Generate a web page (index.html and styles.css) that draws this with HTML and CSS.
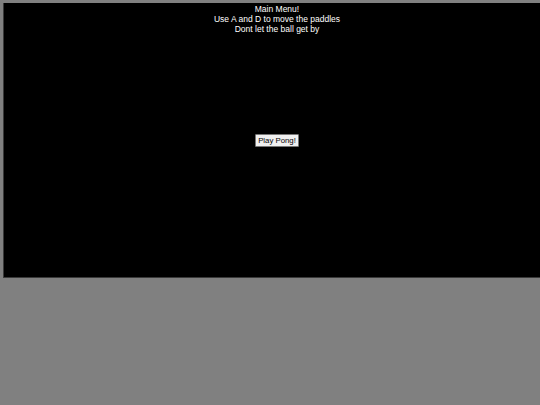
FILE: index.html
```html
<!DOCTYPE html>
<html>
<head>
<meta charset="utf-8">
<link rel="stylesheet" href="styles.css">
</head>
<body>
<div class="game">
  <div class="menu">
    <div>Main Menu!</div>
    <div>Use A and D to move the paddles</div>
    <div>Dont let the ball get by</div>
  </div>
  <button class="play">Play Pong!</button>
</div>
</body>
</html>
```
FILE: styles.css
```css
html, body {
  margin: 0;
  padding: 0;
  background: #808080;
  overflow: hidden;
}
body {
  padding: 3px 0 0 3px;
  width: 540px;
  height: 405px;
  box-sizing: border-box;
}
.game {
  width: 548px;
  height: 275px;
  background: #000;
  box-shadow: inset 1px 0 0 #3a3a3a, inset 0 -1px 0 #3a3a3a;
  display: grid;
  font-family: "Liberation Sans", Arial, sans-serif;
  color: #fff;
}
.menu {
  grid-area: 1 / 1;
  align-self: start;
  text-align: center;
  font-size: 8.5px;
  line-height: 10.4px;
  padding-top: 0.5px;
}
.play {
  grid-area: 1 / 1;
  align-self: center;
  justify-self: center;
  font-family: "Liberation Sans", Arial, sans-serif;
  font-size: 7.8px;
  padding: 1px 2px;
  background: #f0f0f0;
  border: 1px solid #767676;
  border-radius: 1px;
  color: #000;
  line-height: 9px;
}
```
